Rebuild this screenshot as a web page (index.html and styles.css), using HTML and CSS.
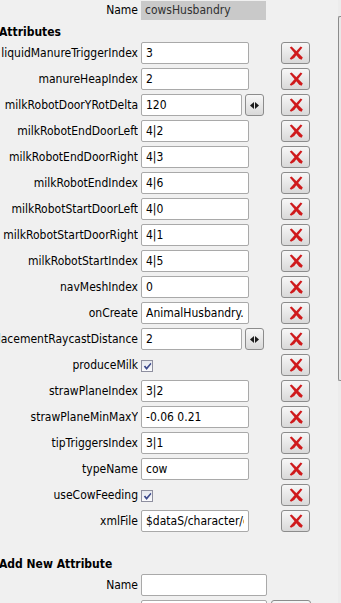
FILE: index.html
```html
<!DOCTYPE HTML><html>
<head>
  <title>Attributes</title>
  <meta name="viewport" content="width=device-width, initial-scale=1">
  <meta charset="UTF-8">
  <link rel="stylesheet" href="styles.css">
</head>
<body>
<div class="window">
  <div class="panel">
    <div class="row name-row">
      <span class="label">Name</span>
      <span class="readonly">cowsHusbandry</span>
    </div>

    <h4 class="section">Attributes</h4>
    <div class="attr-list">
      <div class="row"><label class="label">liquidManureTriggerIndex</label><div class="field"><input class="text" type="text" value="3"></div><button class="btn btn-del"><svg class="x" viewBox="0 0 14 14"><path d="M0.8 1.6 L2.6 0.6 L13.8 11.4 L12.6 13.8 L10.2 12.8 Z"/><path d="M11.6 0.6 L13.4 1.4 L5.2 12 L2 13.8 L0.8 12.4 Z"/></svg></button></div>
      <div class="row"><label class="label">manureHeapIndex</label><div class="field"><input class="text" type="text" value="2"></div><button class="btn btn-del"><svg class="x" viewBox="0 0 14 14"><path d="M0.8 1.6 L2.6 0.6 L13.8 11.4 L12.6 13.8 L10.2 12.8 Z"/><path d="M11.6 0.6 L13.4 1.4 L5.2 12 L2 13.8 L0.8 12.4 Z"/></svg></button></div>
      <div class="row"><label class="label">milkRobotDoorYRotDelta</label><div class="field"><input class="text short" type="text" value="120"><button class="btn btn-spin"><svg class="arrows" viewBox="0 0 9 7"><path d="M0 3.5 L4 0 L4 7 Z"/><path d="M9 3.5 L5 0 L5 7 Z"/></svg></button></div><button class="btn btn-del"><svg class="x" viewBox="0 0 14 14"><path d="M0.8 1.6 L2.6 0.6 L13.8 11.4 L12.6 13.8 L10.2 12.8 Z"/><path d="M11.6 0.6 L13.4 1.4 L5.2 12 L2 13.8 L0.8 12.4 Z"/></svg></button></div>
      <div class="row"><label class="label">milkRobotEndDoorLeft</label><div class="field"><input class="text" type="text" value="4|2"></div><button class="btn btn-del"><svg class="x" viewBox="0 0 14 14"><path d="M0.8 1.6 L2.6 0.6 L13.8 11.4 L12.6 13.8 L10.2 12.8 Z"/><path d="M11.6 0.6 L13.4 1.4 L5.2 12 L2 13.8 L0.8 12.4 Z"/></svg></button></div>
      <div class="row"><label class="label">milkRobotEndDoorRight</label><div class="field"><input class="text" type="text" value="4|3"></div><button class="btn btn-del"><svg class="x" viewBox="0 0 14 14"><path d="M0.8 1.6 L2.6 0.6 L13.8 11.4 L12.6 13.8 L10.2 12.8 Z"/><path d="M11.6 0.6 L13.4 1.4 L5.2 12 L2 13.8 L0.8 12.4 Z"/></svg></button></div>
      <div class="row"><label class="label">milkRobotEndIndex</label><div class="field"><input class="text" type="text" value="4|6"></div><button class="btn btn-del"><svg class="x" viewBox="0 0 14 14"><path d="M0.8 1.6 L2.6 0.6 L13.8 11.4 L12.6 13.8 L10.2 12.8 Z"/><path d="M11.6 0.6 L13.4 1.4 L5.2 12 L2 13.8 L0.8 12.4 Z"/></svg></button></div>
      <div class="row"><label class="label">milkRobotStartDoorLeft</label><div class="field"><input class="text" type="text" value="4|0"></div><button class="btn btn-del"><svg class="x" viewBox="0 0 14 14"><path d="M0.8 1.6 L2.6 0.6 L13.8 11.4 L12.6 13.8 L10.2 12.8 Z"/><path d="M11.6 0.6 L13.4 1.4 L5.2 12 L2 13.8 L0.8 12.4 Z"/></svg></button></div>
      <div class="row"><label class="label">milkRobotStartDoorRight</label><div class="field"><input class="text" type="text" value="4|1"></div><button class="btn btn-del"><svg class="x" viewBox="0 0 14 14"><path d="M0.8 1.6 L2.6 0.6 L13.8 11.4 L12.6 13.8 L10.2 12.8 Z"/><path d="M11.6 0.6 L13.4 1.4 L5.2 12 L2 13.8 L0.8 12.4 Z"/></svg></button></div>
      <div class="row"><label class="label">milkRobotStartIndex</label><div class="field"><input class="text" type="text" value="4|5"></div><button class="btn btn-del"><svg class="x" viewBox="0 0 14 14"><path d="M0.8 1.6 L2.6 0.6 L13.8 11.4 L12.6 13.8 L10.2 12.8 Z"/><path d="M11.6 0.6 L13.4 1.4 L5.2 12 L2 13.8 L0.8 12.4 Z"/></svg></button></div>
      <div class="row"><label class="label">navMeshIndex</label><div class="field"><input class="text" type="text" value="0"></div><button class="btn btn-del"><svg class="x" viewBox="0 0 14 14"><path d="M0.8 1.6 L2.6 0.6 L13.8 11.4 L12.6 13.8 L10.2 12.8 Z"/><path d="M11.6 0.6 L13.4 1.4 L5.2 12 L2 13.8 L0.8 12.4 Z"/></svg></button></div>
      <div class="row"><label class="label">onCreate</label><div class="field"><input class="text" type="text" value="AnimalHusbandry.onCreate"></div><button class="btn btn-del"><svg class="x" viewBox="0 0 14 14"><path d="M0.8 1.6 L2.6 0.6 L13.8 11.4 L12.6 13.8 L10.2 12.8 Z"/><path d="M11.6 0.6 L13.4 1.4 L5.2 12 L2 13.8 L0.8 12.4 Z"/></svg></button></div>
      <div class="row"><label class="label">placementRaycastDistance</label><div class="field"><input class="text short" type="text" value="2"><button class="btn btn-spin"><svg class="arrows" viewBox="0 0 9 7"><path d="M0 3.5 L4 0 L4 7 Z"/><path d="M9 3.5 L5 0 L5 7 Z"/></svg></button></div><button class="btn btn-del"><svg class="x" viewBox="0 0 14 14"><path d="M0.8 1.6 L2.6 0.6 L13.8 11.4 L12.6 13.8 L10.2 12.8 Z"/><path d="M11.6 0.6 L13.4 1.4 L5.2 12 L2 13.8 L0.8 12.4 Z"/></svg></button></div>
      <div class="row"><label class="label">produceMilk</label><div class="field"><span class="check"><svg viewBox="0 0 9 9"><path d="M0.8 4.6 L2.2 3.4 L3.6 5.2 L7.6 0.8 L8.4 2 L3.6 8 Z"/></svg></span></div><button class="btn btn-del"><svg class="x" viewBox="0 0 14 14"><path d="M0.8 1.6 L2.6 0.6 L13.8 11.4 L12.6 13.8 L10.2 12.8 Z"/><path d="M11.6 0.6 L13.4 1.4 L5.2 12 L2 13.8 L0.8 12.4 Z"/></svg></button></div>
      <div class="row"><label class="label">strawPlaneIndex</label><div class="field"><input class="text" type="text" value="3|2"></div><button class="btn btn-del"><svg class="x" viewBox="0 0 14 14"><path d="M0.8 1.6 L2.6 0.6 L13.8 11.4 L12.6 13.8 L10.2 12.8 Z"/><path d="M11.6 0.6 L13.4 1.4 L5.2 12 L2 13.8 L0.8 12.4 Z"/></svg></button></div>
      <div class="row"><label class="label">strawPlaneMinMaxY</label><div class="field"><input class="text" type="text" value="-0.06 0.21"></div><button class="btn btn-del"><svg class="x" viewBox="0 0 14 14"><path d="M0.8 1.6 L2.6 0.6 L13.8 11.4 L12.6 13.8 L10.2 12.8 Z"/><path d="M11.6 0.6 L13.4 1.4 L5.2 12 L2 13.8 L0.8 12.4 Z"/></svg></button></div>
      <div class="row"><label class="label">tipTriggersIndex</label><div class="field"><input class="text" type="text" value="3|1"></div><button class="btn btn-del"><svg class="x" viewBox="0 0 14 14"><path d="M0.8 1.6 L2.6 0.6 L13.8 11.4 L12.6 13.8 L10.2 12.8 Z"/><path d="M11.6 0.6 L13.4 1.4 L5.2 12 L2 13.8 L0.8 12.4 Z"/></svg></button></div>
      <div class="row"><label class="label">typeName</label><div class="field"><input class="text" type="text" value="cow"></div><button class="btn btn-del"><svg class="x" viewBox="0 0 14 14"><path d="M0.8 1.6 L2.6 0.6 L13.8 11.4 L12.6 13.8 L10.2 12.8 Z"/><path d="M11.6 0.6 L13.4 1.4 L5.2 12 L2 13.8 L0.8 12.4 Z"/></svg></button></div>
      <div class="row"><label class="label">useCowFeeding</label><div class="field"><span class="check"><svg viewBox="0 0 9 9"><path d="M0.8 4.6 L2.2 3.4 L3.6 5.2 L7.6 0.8 L8.4 2 L3.6 8 Z"/></svg></span></div><button class="btn btn-del"><svg class="x" viewBox="0 0 14 14"><path d="M0.8 1.6 L2.6 0.6 L13.8 11.4 L12.6 13.8 L10.2 12.8 Z"/><path d="M11.6 0.6 L13.4 1.4 L5.2 12 L2 13.8 L0.8 12.4 Z"/></svg></button></div>
      <div class="row"><label class="label">xmlFile</label><div class="field"><input class="text" type="text" value="$dataS/character/cow/cow.xml"></div><button class="btn btn-del"><svg class="x" viewBox="0 0 14 14"><path d="M0.8 1.6 L2.6 0.6 L13.8 11.4 L12.6 13.8 L10.2 12.8 Z"/><path d="M11.6 0.6 L13.4 1.4 L5.2 12 L2 13.8 L0.8 12.4 Z"/></svg></button></div>
    </div>

    <h4 class="section section-add">Add New Attribute</h4>
    <div class="attr-list">
      <div class="row"><label class="label">Name</label><div class="field"><input class="text wide" type="text" value=""></div></div>
      <div class="row"><span class="label"></span><div class="field"><input class="text wide" type="text" value=""><button class="btn btn-add"></button></div></div>
    </div>
  </div>
  <div class="scrollbar"><div class="thumb"></div></div>
</div>
</body>
</html>
```

FILE: styles.css
```css
html, body {margin: 0; padding: 0;}
body {
	background: #f0f0f0;
	font: 12px "DejaVu Sans Condensed", "DejaVu Sans", sans-serif;
	font-stretch: condensed;
	color: #000;
	overflow: hidden;
}

.window {display: flex; height: 603px;}
.panel {width: 338px; flex: none;}

.row {display: flex; align-items: center; height: 22px;}

.label {
	width: 138px;
	margin-right: 3px;
	flex: none;
	display: flex;
	justify-content: flex-end;
	white-space: nowrap;
	overflow: hidden;
	line-height: 22px;
}

.name-row {margin-top: 1px; height: 19px;}
.name-row .label {line-height: 19px;}
.readonly {
	width: 125px;
	height: 19px;
	line-height: 19px;
	padding-left: 4px;
	box-sizing: border-box;
	background: #c9c9c9;
	color: #303030;
}

.section {
	margin: 4px 0 2px -1px;
	font-size: 12px;
	font-weight: bold;
	line-height: 16px;
}
.section-add {margin-top: 24px;}

.attr-list {display: flex; flex-direction: column; gap: 4px;}

.field {width: 140px; flex: none; display: flex; align-items: center; gap: 3px;}

.text {
	width: 108px;
	height: 22px;
	box-sizing: border-box;
	margin: 0;
	padding: 0 4px;
	border: 1px solid #a9a9a9;
	border-radius: 2px;
	background: #fff;
	font: inherit;
	color: #000;
	outline: none;
}
.text.short {width: 101px;}
.text.wide {width: 126px; flex: none;}

.btn {
	margin: 0;
	padding: 0;
	box-sizing: border-box;
	border: 1px solid #8c8c8c;
	border-radius: 3px;
	background: linear-gradient(#f7f7f7, #d9d9d9);
	display: flex;
	align-items: center;
	justify-content: center;
	flex: none;
	font: inherit;
}
.btn-del {width: 29px; height: 22px;}
.btn-spin {width: 19px; height: 22px;}
.btn-add {width: 40px; height: 22px; margin-left: 1px;}

.x {width: 14px; height: 14px; fill: #cf1a1c;}
.arrows {width: 9px; height: 7px; fill: #1a1a1a;}

.check {
	width: 12px;
	height: 12px;
	margin-top: 2px;
	box-sizing: border-box;
	border: 1px solid #8e8f9f;
	background: linear-gradient(#e6e8ee, #fbfbfd);
	display: flex;
	align-items: center;
	justify-content: center;
}
.check svg {width: 9px; height: 9px; fill: #3d4a8c;}

.scrollbar {flex: 1; background: #ececec;}
.thumb {
	margin-top: 16px;
	height: 365px;
	box-sizing: border-box;
	border: 1px solid #8b8b8b;
	border-right: 0;
	border-radius: 2px 0 0 2px;
	background: #e8e8e8;
}
```
